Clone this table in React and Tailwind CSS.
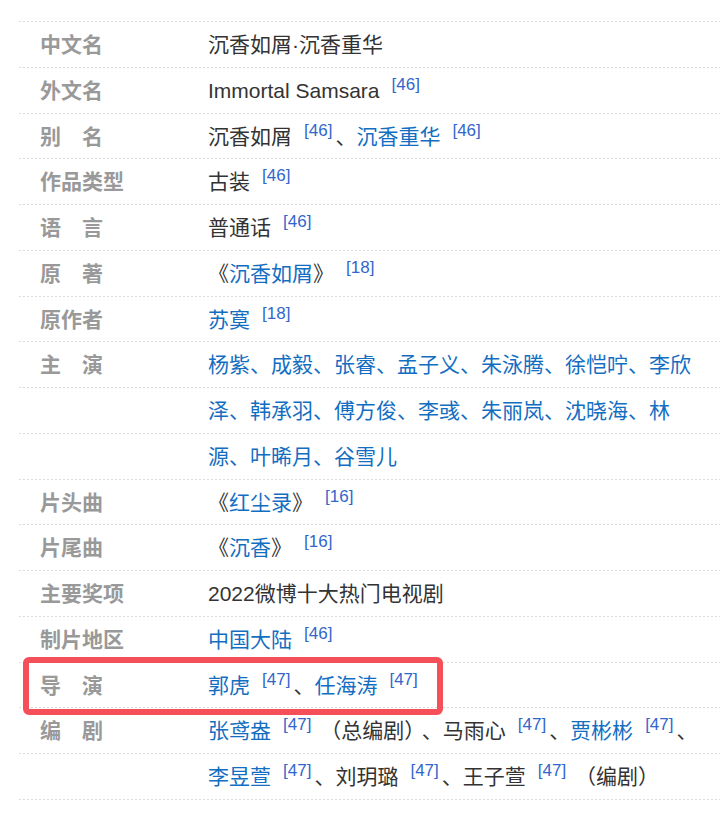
import React from "react";

const font = "font-['Liberation_Sans','Noto_Sans_CJK_SC',sans-serif]";
const dots = "bg-[linear-gradient(to_right,#dcdcdc_50%,transparent_50%)] bg-[length:4px_1px] bg-repeat-x bg-bottom";

const Ref = ({ n }) => (
  <sup className="static align-[8px] ml-[12px] mr-[3px] text-[17px] leading-[0] text-[#3366cc]">[{n}]</sup>
);

const A = ({ children }) => <span className="text-[#136ec2]">{children}</span>;

const rows = [
  { label: "中文名", value: <>沉香如屑·沉香重华</> },
  { label: "外文名", value: <>Immortal Samsara<Ref n="46" /></> },
  { label: "别　名", value: <>沉香如屑<Ref n="46" />、<A>沉香重华</A><Ref n="46" /></> },
  { label: "作品类型", value: <>古装<Ref n="46" /></> },
  { label: "语　言", value: <>普通话<Ref n="46" /></> },
  { label: "原　著", value: <>《<A>沉香如屑</A>》<Ref n="18" /></> },
  { label: "原作者", value: <><A>苏寞</A><Ref n="18" /></> },
  { label: "主　演", value: <A>杨紫、成毅、张睿、孟子义、朱泳腾、徐恺咛、李欣</A> },
  { label: "", value: <A>泽、韩承羽、傅方俊、李彧、朱丽岚、沈晓海、林</A> },
  { label: "", value: <A>源、叶晞月、谷雪儿</A> },
  { label: "片头曲", value: <>《<A>红尘录</A>》<Ref n="16" /></> },
  { label: "片尾曲", value: <>《<A>沉香</A>》<Ref n="16" /></> },
  { label: "主要奖项", value: <>2022微博十大热门电视剧</> },
  { label: "制片地区", value: <><A>中国大陆</A><Ref n="46" /></> },
  { label: "导　演", value: <><A>郭虎</A><Ref n="47" />、<A>任海涛</A><Ref n="47" /></> },
  { label: "编　剧", value: <><A>张鸢盎</A><Ref n="47" /> （总编剧）<span className="ml-[7px]">、</span>马雨心<Ref n="47" />、<A>贾彬彬</A><Ref n="47" />、</> },
  { label: "", value: <><A>李昱萱</A><Ref n="47" />、刘玥璐<Ref n="47" />、王子萱<Ref n="47" /> （编剧）</> },
];

export default function App() {
  return (
    <div className={`relative w-[720px] h-[829px] bg-white overflow-hidden ${font}`}>
      <div className="pl-[18px] pt-[21px]">
        <div className={`h-px ${dots}`} />
        {rows.map((r, i) => (
          <div key={i} className={`flex items-center h-[45.75px] pl-[22px] text-[21px] ${dots}`}>
            <div className="w-[168px] shrink-0 font-bold text-[#999]">{r.label}</div>
            <div className="whitespace-nowrap text-[#333]">{r.value}</div>
          </div>
        ))}
      </div>

      {/* annotation box */}
      <div className="absolute left-[23px] top-[657px] w-[420px] h-[58px] border-[6px] border-[#f5505a] rounded-[6px]" />
    </div>
  );
}
